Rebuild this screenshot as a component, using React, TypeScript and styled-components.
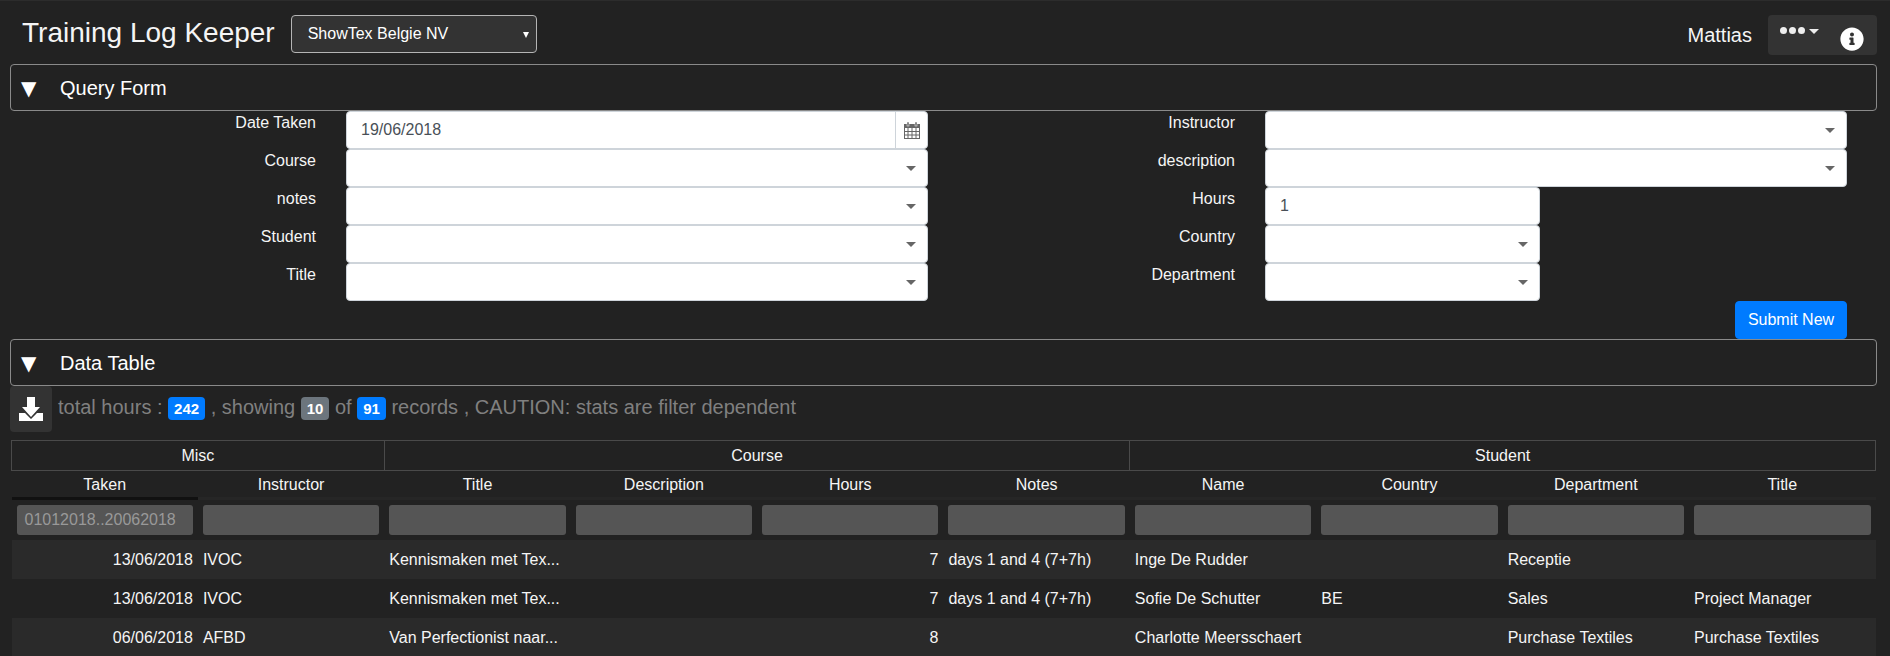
import React from 'react'
import styled, { createGlobalStyle } from 'styled-components'
import { FaInfoCircle } from 'react-icons/fa'

const GlobalStyle = createGlobalStyle`
  html, body {
    margin: 0;
    padding: 0;
    height: 656px;
    overflow: hidden;
    background: #222222;
  }
  body {
    font-family: "Liberation Sans", Arial, sans-serif;
    font-size: 16px;
    line-height: 24px;
    color: #ffffff;
  }
  * {
    box-sizing: border-box;
  }
`

const Page = styled.div`
  width: 1890px;
  height: 656px;
  overflow: hidden;
  background: #222222;
  border-top: 1px solid #2c2c2c;
`

// Top bar with app title, company picker and user menu
const Header = styled.header`
  display: flex;
  align-items: flex-start;
  height: 63px;
  padding: 14px 13px 0 22px;
`

const Title = styled.h1`
  margin: 1px 16px 0 0;
  font-size: 28px;
  line-height: 34px;
  font-weight: 400;
  color: #f5f5f5;
`

const CompanySelect = styled.div`
  position: relative;
  width: 246px;
  height: 38px;
  padding: 6px 16px;
  background: #333333;
  border: 1px solid #b5b5b5;
  border-radius: 4px;
  color: #ffffff;

  &::after {
    content: '';
    position: absolute;
    right: 7px;
    top: 16px;
    border-left: 3px solid transparent;
    border-right: 3px solid transparent;
    border-top: 6px solid #ffffff;
  }
`

const UserName = styled.span`
  margin: 8px 0 0 auto;
  font-size: 20px;
  color: #f5f5f5;
`

const UserMenu = styled.div`
  position: relative;
  display: flex;
  justify-content: space-between;
  width: 109px;
  height: 40px;
  margin-left: 16px;
  padding: 12px 13px 0 12px;
  background: #333333;
  border-radius: 4px;
`

const Dots = styled.span`
  display: flex;
  align-items: flex-start;
  gap: 2px;
  height: 12px;
`

const Dot = styled.i`
  width: 7px;
  height: 7px;
  border-radius: 50%;
  background: #eeeeee;
`

const MenuCaret = styled.i`
  margin: 2px 0 0 2px;
  border-left: 5px solid transparent;
  border-right: 5px solid transparent;
  border-top: 5px solid #eeeeee;
`

const InfoIcon = styled(FaInfoCircle)`
  width: 24px;
  height: 24px;
  color: #ffffff;
`

// Collapsible section heading
const Panel = styled.div`
  display: flex;
  align-items: center;
  height: 47px;
  margin: 0 13px 0 10px;
  padding: 0 10px;
  border: 1px solid #8a8a8a;
  border-radius: 4px;
  font-size: 20px;
  color: #ffffff;
`

const PanelArrow = styled.span`
  width: 39px;
  font-family: "DejaVu Sans", sans-serif;
  font-size: 20px;
`

// Query form
const FormGrid = styled.form`
  display: grid;
  grid-template-columns: 902px 902px;
  column-gap: 17px;
  padding-left: 26px;
  margin: 0;
`

const Field = styled.div`
  display: grid;
  grid-template-columns: 290px 582px;
  column-gap: 30px;
  height: 38px;
`

const FieldLabel = styled.label`
  text-align: right;
  color: #f5f5f5;
`

const Control = styled.div<{ $short?: boolean }>`
  position: relative;
  display: flex;
  width: ${({ $short }) => ($short ? '275px' : '582px')};
  height: 38px;
  padding: 6px 12px 6px 14px;
  background: #ffffff;
  border: 1px solid #ced4da;
  border-radius: 4px;
  color: #495057;
`

const ControlCaret = styled.i`
  position: absolute;
  right: 11px;
  top: 16px;
  border-left: 5px solid transparent;
  border-right: 5px solid transparent;
  border-top: 5px solid #666666;
`

const CalendarAddon = styled.div`
  position: absolute;
  right: 0;
  top: 0;
  bottom: 0;
  display: flex;
  align-items: center;
  justify-content: center;
  width: 32px;
  border-left: 1px solid #ced4da;
`

const SubmitRow = styled.div`
  display: flex;
  justify-content: flex-end;
  padding-right: 43px;
`

const SubmitButton = styled.button`
  width: 112px;
  height: 38px;
  padding: 0;
  background: #007bff;
  border: 1px solid #007bff;
  border-radius: 4px;
  font: inherit;
  color: #ffffff;
`

// Stats line above the table
const StatsBar = styled.div`
  display: flex;
  align-items: flex-start;
  height: 47px;
  margin: 0 0 7px 10px;
  padding-top: 9px;
  font-size: 20px;
  color: #808080;
  white-space: pre;
`

const DownloadButton = styled.div`
  display: flex;
  align-items: center;
  justify-content: center;
  width: 42px;
  height: 46px;
  margin: -9px 6px 0 0;
  background: #333333;
  border-radius: 4px;
  color: #ffffff;
`

const Badge = styled.span<{ $muted?: boolean }>`
  display: inline-block;
  margin: 2px 0 0;
  padding: 0 6px;
  height: 23px;
  line-height: 23px;
  font-size: 15px;
  font-weight: 700;
  color: #ffffff;
  background: ${({ $muted }) => ($muted ? '#6c757d' : '#007bff')};
  border-radius: 4px;
`

// Data table
const Table = styled.table`
  width: 1865px;
  margin-left: 11px;
  table-layout: fixed;
  border-collapse: collapse;
  color: #f5f5f5;
`

const GroupCell = styled.th`
  height: 30px;
  padding: 0;
  font-weight: 400;
  border: 1px solid #4a4a4a;
`

const HeadCell = styled.th<{ $sorted?: boolean }>`
  height: 28px;
  padding: 2px 0 0;
  font-weight: 400;
  border-bottom: 3px solid ${({ $sorted }) => ($sorted ? '#111111' : '#262626')};
`

const FilterCell = styled.td`
  height: 40px;
  padding: 5px;
  background: #222222;
`

const FilterBox = styled.div`
  height: 30px;
  padding: 0 8px;
  line-height: 29px;
  background: #555555;
  border-radius: 3px;
  color: #999999;
  white-space: nowrap;
`

const Row = styled.tr<{ $odd?: boolean }>`
  background: ${({ $odd }) => ($odd ? '#2a2a2a' : '#222222')};
`

const Cell = styled.td<{ $right?: boolean }>`
  height: 39px;
  padding: 0 5px;
  text-align: ${({ $right }) => ($right ? 'right' : 'left')};
  white-space: nowrap;
`

const CalendarIcon = () => (
  <svg width="16" height="17" viewBox="0 0 16 17" fill="none" stroke="#666666">
    <rect x="0.5" y="2.5" width="15" height="14" />
    <rect x="0" y="2" width="16" height="4" fill="#666666" stroke="none" />
    <path d="M0.5 9.5H15.5M0.5 13H15.5M4 6V16M8 6V16M12 6V16" />
    <rect x="3" y="0" width="2" height="4" fill="#666666" stroke="#ffffff" strokeWidth="0.5" />
    <rect x="11" y="0" width="2" height="4" fill="#666666" stroke="#ffffff" strokeWidth="0.5" />
  </svg>
)

const DownloadIcon = () => (
  <svg width="24" height="24" viewBox="0 0 24 24" fill="#ffffff">
    <path d="M8 0h8v10h5l-9 10-9-10h5z" />
    <path d="M0 16h6l6 6 6-6h6v8H0z" />
  </svg>
)

const leftFields = [
  { label: 'Date Taken', value: '19/06/2018', calendar: true },
  { label: 'Course' },
  { label: 'notes' },
  { label: 'Student' },
  { label: 'Title' },
]

const rightFields = [
  { label: 'Instructor' },
  { label: 'description' },
  { label: 'Hours', value: '1', short: true, plain: true },
  { label: 'Country', short: true },
  { label: 'Department', short: true },
]

const columns = ['Taken', 'Instructor', 'Title', 'Description', 'Hours', 'Notes', 'Name', 'Country', 'Department', 'Title']

const rows = [
  ['13/06/2018', 'IVOC', 'Kennismaken met Tex...', '', '7', 'days 1 and 4 (7+7h)', 'Inge De Rudder', '', 'Receptie', ''],
  ['13/06/2018', 'IVOC', 'Kennismaken met Tex...', '', '7', 'days 1 and 4 (7+7h)', 'Sofie De Schutter', 'BE', 'Sales', 'Project Manager'],
  ['06/06/2018', 'AFBD', 'Van Perfectionist naar...', '', '8', '', 'Charlotte Meersschaert', '', 'Purchase Textiles', 'Purchase Textiles'],
]

type FieldDef = { label: string; value?: string; calendar?: boolean; short?: boolean; plain?: boolean }

const FormField = ({ field }: { field: FieldDef }) => (
  <Field>
    <FieldLabel>{field.label}</FieldLabel>
    <Control $short={field.short}>
      {field.value}
      {field.calendar ? (
        <CalendarAddon>
          <CalendarIcon />
        </CalendarAddon>
      ) : (
        !field.plain && <ControlCaret />
      )}
    </Control>
  </Field>
)

export default function App() {
  return (
    <Page>
      <GlobalStyle />
      <Header>
        <Title>Training Log Keeper</Title>
        <CompanySelect>ShowTex Belgie NV</CompanySelect>
        <UserName>Mattias</UserName>
        <UserMenu>
          <Dots>
            <Dot />
            <Dot />
            <Dot />
            <MenuCaret />
          </Dots>
          <InfoIcon />
        </UserMenu>
      </Header>

      <Panel>
        <PanelArrow>▼</PanelArrow>
        Query Form
      </Panel>

      <FormGrid>
        {leftFields.map((field, i) => (
          <React.Fragment key={field.label}>
            <FormField field={field} />
            <FormField field={rightFields[i]} />
          </React.Fragment>
        ))}
      </FormGrid>
      <SubmitRow>
        <SubmitButton type="button">Submit New</SubmitButton>
      </SubmitRow>

      <Panel>
        <PanelArrow>▼</PanelArrow>
        Data Table
      </Panel>

      <StatsBar>
        <DownloadButton>
          <DownloadIcon />
        </DownloadButton>
        {'total hours : '}
        <Badge>242</Badge>
        {' , showing '}
        <Badge $muted>10</Badge>
        {' of '}
        <Badge>91</Badge>
        {' records , CAUTION: stats are filter dependent'}
      </StatsBar>

      <Table>
        <thead>
          <tr>
            <GroupCell colSpan={2}>Misc</GroupCell>
            <GroupCell colSpan={4}>Course</GroupCell>
            <GroupCell colSpan={4}>Student</GroupCell>
          </tr>
          <tr>
            {columns.map((col, i) => (
              <HeadCell key={i} $sorted={i === 0}>
                {col}
              </HeadCell>
            ))}
          </tr>
          <tr>
            {columns.map((_, i) => (
              <FilterCell key={i}>
                <FilterBox>{i === 0 ? '01012018..20062018' : ''}</FilterBox>
              </FilterCell>
            ))}
          </tr>
        </thead>
        <tbody>
          {rows.map((row, r) => (
            <Row key={r} $odd={r % 2 === 0}>
              {row.map((value, c) => (
                <Cell key={c} $right={c === 0 || c === 4}>
                  {value}
                </Cell>
              ))}
            </Row>
          ))}
        </tbody>
      </Table>
    </Page>
  )
}
